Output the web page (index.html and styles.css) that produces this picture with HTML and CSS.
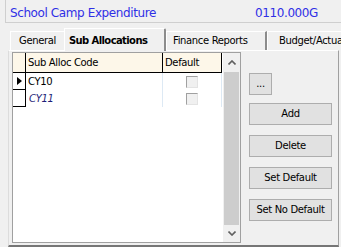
FILE: index.html
```html
<!DOCTYPE html>
<html>
<head>
<meta charset="utf-8">
<link rel="stylesheet" href="styles.css">
</head>
<body>
<div class="header">
  <span class="title">School Camp Expenditure</span>
  <span class="code">0110.000G</span>
</div>
<div class="tabs">
  <div class="tab tab-general">General</div>
  <div class="tab tab-active">Sub Allocations</div>
  <div class="tab tab-finance">Finance Reports</div>
  <div class="tab tab-budget">Budget/Actual</div>
</div>
<div class="panel">
  <div class="grid">
    <div class="table">
      <div class="hcell ind"></div>
      <div class="hcell">Sub Alloc Code</div>
      <div class="hcell">Default</div>

      <div class="cell ind"><span class="arrow"></span></div>
      <div class="cell">CY10</div>
      <div class="cell chk"><span class="box"></span></div>

      <div class="cell ind"></div>
      <div class="cell italic">CY11</div>
      <div class="cell chk"><span class="box"></span></div>
    </div>
    <div class="scrollbar">
      <div class="sb-btn sb-up">
        <svg width="8" height="5" viewBox="0 0 8 5"><polyline points="0.5,4.5 4,1 7.5,4.5" fill="none" stroke="#606060" stroke-width="1.6"/></svg>
      </div>
      <div class="sb-track"></div>
      <div class="sb-thumb"></div>
      <div class="sb-btn sb-down">
        <svg width="8" height="5" viewBox="0 0 8 5"><polyline points="0.5,0.5 4,4 7.5,0.5" fill="none" stroke="#606060" stroke-width="1.6"/></svg>
      </div>
    </div>
  </div>
  <div class="buttons">
    <button class="btn btn-dots">...</button>
    <button class="btn">Add</button>
    <button class="btn">Delete</button>
    <button class="btn">Set Default</button>
    <button class="btn">Set No Default</button>
  </div>
</div>
</body>
</html>
```
FILE: styles.css
```css
html, body {
  margin: 0;
  padding: 0;
}
body {
  width: 341px;
  height: 247px;
  overflow: hidden;
  background: #f0f0f0;
  font-family: "DejaVu Sans", sans-serif;
  font-size: 10px;
  letter-spacing: -0.35px;
  color: #000;
}

/* header */
.header {
  margin-left: 5px;
  height: 23px;
  box-sizing: border-box;
  border-left: 1px solid #cfcfcf;
  border-bottom: 1px solid #cfcfcf;
  display: flex;
  align-items: center;
  justify-content: space-between;
  padding: 3px 23px 0 4px;
  color: #2f2fe6;
  font-size: 12px;
  letter-spacing: -0.4px;
}

/* tabs */
.tabs {
  position: relative;
  z-index: 1;
  display: flex;
  align-items: flex-end;
  height: 23px;
  margin-top: 5px;
  margin-bottom: -1px;
  padding-left: 10px;
  overflow: hidden;
}
.tab {
  flex-shrink: 0;
  height: 19px;
  margin-bottom: 1px;
  box-sizing: border-box;
  border-top: 1px solid #fff;
  border-left: 1px solid #fff;
  line-height: 18px;
  white-space: nowrap;
  background: #f0f0f0;
}
.tab-general {
  width: 54px;
  padding-left: 8px;
}
.tab-active {
  width: 102px;
  height: 23px;
  margin-bottom: 0;
  padding: 2px 0 0 4px;
  line-height: 20px;
  font-weight: bold;
  letter-spacing: -0.6px;
  border-right: 2px solid #8c8c8c;
  border-top-right-radius: 2px;
}
.tab-finance {
  width: 101px;
  padding-left: 6px;
  border-right: 2px solid #8c8c8c;
}
.tab-budget {
  width: 100px;
  padding-left: 11px;
}

/* panel */
.panel {
  margin-left: 8px;
  width: 331px;
  height: 197px;
  box-sizing: border-box;
  border-top: 1px solid #fff;
  border-left: 1px solid #dcdcdc;
  border-right: 1px solid #a0a0a0;
  border-bottom: 2px solid #767676;
  padding: 1px 0 2px 3px;
  display: flex;
  align-items: flex-start;
}

/* grid */
.grid {
  display: flex;
  width: 229px;
  height: 191px;
  box-sizing: border-box;
  border: 1px solid #a0a0a0;
  background: #fff;
}
.table {
  width: 210px;
  display: grid;
  grid-template-columns: 13px 137px 59px;
  grid-template-rows: 20px 17px 17px;
  align-content: start;
}
.hcell {
  background: #fdf7e9;
  border-right: 1px solid #000;
  border-bottom: 1px solid #000;
  box-sizing: border-box;
  padding: 1px 0 0 2px;
  line-height: 18px;
  white-space: nowrap;
}
.cell {
  border-right: 1px solid #dde9f4;
  box-sizing: border-box;
  padding: 1px 0 0 2px;
  line-height: 16px;
  white-space: nowrap;
}
.cell.ind {
  border-right: 1px solid #000;
  border-bottom: 1px solid #000;
  padding: 0;
}
.italic {
  font-style: italic;
  color: #1e1e78;
  padding-left: 3px;
}
.arrow {
  display: block;
  width: 0;
  height: 0;
  margin: 4px 0 0 4px;
  border-top: 4.5px solid transparent;
  border-bottom: 4.5px solid transparent;
  border-left: 5px solid #000;
}
.chk {
  display: flex;
  align-items: center;
  justify-content: center;
  padding: 0;
}
.box {
  width: 12px;
  height: 12px;
  box-sizing: border-box;
  border: 1px solid;
  border-color: #a0a0a0 #e3e3e3 #e3e3e3 #a0a0a0;
  background: #f0f0f0;
}

/* scrollbar */
.scrollbar {
  width: 17px;
  display: flex;
  flex-direction: column;
  background: #f0f0f0;
}
.sb-btn {
  height: 17px;
  display: flex;
  align-items: center;
  justify-content: center;
}
.sb-up {
  padding-top: 2px;
  box-sizing: border-box;
}
.sb-track {
  height: 2px;
}
.sb-thumb {
  height: 153px;
  margin: 0 1px;
  background: #cdcdcd;
}

/* buttons */
.buttons {
  display: flex;
  flex-direction: column;
  align-items: flex-start;
  gap: 10px;
  margin-left: 8px;
  padding-top: 21px;
}
.btn {
  width: 83px;
  height: 22px;
  box-sizing: border-box;
  border: 1px solid #adadad;
  background: #e1e1e1;
  padding: 0;
  margin: 0;
  font: inherit;
  letter-spacing: inherit;
  color: #000;
  text-align: center;
  line-height: 20px;
}
.btn-dots {
  width: 23px;
  margin-bottom: -2px;
}
```
